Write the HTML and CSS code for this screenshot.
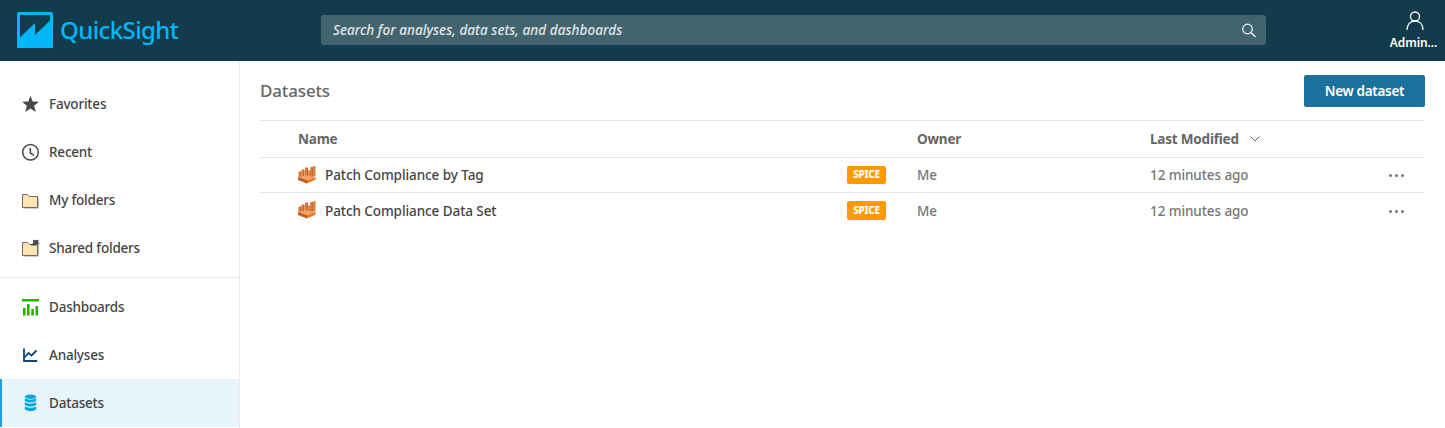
FILE: index.html
```html
<!DOCTYPE html>
<html lang="en">
<head>
<meta charset="utf-8">
<title>QuickSight</title>
<link rel="stylesheet" href="styles.css">
</head>
<body>
<svg width="0" height="0" class="defs" aria-hidden="true">
  <symbol id="dataset" viewBox="0 0 18 18">
    <path fill="#e27a30" d="M.5 5.500h2.500V11H.5zM3.500 3.500H6V12H3.500zM7 1.500h2.500V12H7zM10.300 4.500h2V12h-2zM12.300 1h2.500v10.500h-2.500zM15.300 0h2.200v10.500h-2.200z"/>
    <path fill="#ad5522" d="M2.500 5.500l.9.500v6h-.9zM5.600 3.500l.9.500v8h-.9zM9.200 1.500l.9.500v10h-.9zM14.300 1l.9.500v10h-.9z"/>
    <path fill="#f5a468" d="M0 11l9-1.500 8.500 1.500L9 14z"/>
    <path fill="#bf5b20" d="M0 11l9 3v3.500l-9-3.500z"/>
    <path fill="#e87b2b" d="M9 14l8.500-3v2.800L9 17.500z"/>
  </symbol>
</svg>
<header class="topbar">
  <div class="brand">
    <svg width="36" height="36" viewBox="0 0 36 36"><rect width="36" height="36" rx="1.500" fill="#02b6f8"/><path d="M3 3h30v5.500L18 23V11L3 25.500z" fill="#123c4c"/></svg>
    <span class="brand-name">QuickSight</span>
  </div>
  <div class="search">
    <span class="search-text">Search for analyses, data sets, and dashboards</span>
    <svg class="search-icon" width="16" height="16" viewBox="0 0 16 16" fill="none" stroke="#eef3f4" stroke-width="1.200"><circle cx="6.500" cy="6" r="4.800"/><path d="M10 9.500l4.500 4.500"/></svg>
  </div>
  <div class="user">
    <svg width="20" height="20" viewBox="0 0 20 20" fill="none" stroke="#fff" stroke-width="1.300"><circle cx="10" cy="5.500" r="4.500"/><path d="M2 19c0-5.600 3.300-9 8-9s8 3.400 8 9"/></svg>
    <span class="user-name">Admin...</span>
  </div>
</header>
<div class="body">
  <nav class="sidebar">
    <a class="item"><svg class="icon" viewBox="0 0 18 18"><path fill="#484848" d="M8.500 .8l2.200 5.700 6.200.3-4.800 3.900 1.700 6.200-5.300-3.500-5.300 3.500 1.700-6.200L.1 6.800l6.200-.3z"/></svg><span>Favorites</span></a>
    <a class="item"><svg class="icon" viewBox="0 0 18 18" fill="none" stroke="#484848" stroke-width="1.500"><circle cx="8.500" cy="9.300" r="7.800"/><path d="M8.300 5v5l3.700 2.300"/></svg><span>Recent</span></a>
    <a class="item"><svg class="icon folder" viewBox="0 0 18 18"><path d="M1.500 3.500h4l2 2h9v10.700h-15z" fill="none" stroke="#bbb"/><path d="M.5 2.500h5l2 2H15.500v11H.5z" fill="#fee6b0" stroke="#706a5e"/></svg><span>My folders</span></a>
    <a class="item"><svg class="icon folder" viewBox="0 0 18 18"><path d="M1.500 3.500h4l2 2h9v10.700h-15z" fill="none" stroke="#bbb"/><path d="M.5 2.500h5l2 2H15.500v11H.5z" fill="#fee6b0" stroke="#706a5e"/><path fill="#484848" d="M9 5.500q0-2 2.500-2.500-1.500-3 1-3.200 1.300 0 1.300 1 1-1.600 2.500-.8.800 1-.3 2.500 2 .5 1.700 2L15 3.800l.5 1.700z"/></svg><span>Shared folders</span></a>
    <div class="divider"></div>
    <a class="item"><svg class="icon" viewBox="0 0 18 18" fill="#2eb000"><path d="M0 1h17v2.500H0zM1 10h2.600v7.500H1zM5 6h2.600v11.500H5zM9.300 11h2.600v6.500H9.300zM13.500 8H16v9.500h-2.500z"/></svg><span>Dashboards</span></a>
    <a class="item"><svg class="icon" viewBox="0 0 18 18" fill="none" stroke="#104678" stroke-width="1.800"><path d="M2 2.500v12.500h13.200M2.500 11.500l4-4.500 3 2.500 5-5"/></svg><span>Analyses</span></a>
    <a class="item active"><svg class="icon" viewBox="0 0 18 18" fill="#09a5dd"><ellipse cx="8.500" cy="2.700" rx="5.700" ry="2.200"/><path d="M2.800 4.300q5.700 2.700 11.400 0v2.600q-5.700 3.300-11.400 0zM2.800 8.200q5.700 2.900 11.400 0v2.800q-5.700 3.300-11.400 0zM2.800 12.400q5.700 2.900 11.400 0v3q-5.700 3.600-11.400 0z"/></svg><span>Datasets</span></a>
  </nav>
  <main class="main">
    <div class="title-row"><h1>Datasets</h1><button class="new">New dataset</button></div>
    <div class="table">
      <div class="row head">
        <div class="name">Name</div><div class="owner">Owner</div>
        <div class="modified"><span>Last Modified</span><svg width="10" height="6" viewBox="0 0 10 6" fill="none" stroke="#666"><path d="M.5.500L5 5 9.500.500"/></svg></div><div class="more"></div>
      </div>
      <div class="row">
        <div class="name"><svg class="ds"><use href="#dataset"/></svg><span>Patch Compliance by Tag</span><b class="spice">SPICE</b></div><div class="owner">Me</div>
        <div class="modified">12 minutes ago</div><div class="more"><i></i><i></i><i></i></div>
      </div>
      <div class="row last">
        <div class="name"><svg class="ds"><use href="#dataset"/></svg><span>Patch Compliance Data Set</span><b class="spice">SPICE</b></div><div class="owner">Me</div>
        <div class="modified">12 minutes ago</div><div class="more"><i></i><i></i><i></i></div>
      </div>
    </div>
  </main>
</div>
</body>
</html>
```
FILE: styles.css
```css
* { box-sizing: border-box; }
body { margin: 0; height: 428px; overflow: hidden; background: #fff; font-family: "Noto Sans", "Open Sans", sans-serif; font-size: 13.500px; font-weight: 500; color: #444; white-space: nowrap; }
.defs { display: none; }
.topbar { height: 61px; background: #123c4c; display: flex; align-items: flex-start; }
.brand { width: 321px; padding: 12px 0 0 17px; display: flex; gap: 7px; }
.brand-name { color: #02b6f8; font-size: 24px; font-weight: 500; line-height: 36px; letter-spacing: -.6px; }
.search { width: 945px; height: 30px; margin-top: 15px; padding: 0 9px 0 12px; border-radius: 3px; background: #42646f; display: flex; align-items: center; justify-content: space-between; }
.search-text { color: #e0e6e8; font-style: italic; font-size: 13.500px; font-weight: 500; letter-spacing: .05px; }
.search-icon { margin-top: 2px; }
.user { width: 64px; margin-left: 115px; padding: 11px 0 0 4px; display: flex; flex-direction: column; align-items: center; color: #fff; }
.user-name { font-size: 12px; line-height: 17px; margin-top: 3px; font-weight: 600; letter-spacing: -.1px; padding-right: 3px; }
.body { display: flex; height: 367px; }
.sidebar { width: 240px; padding-top: 19px; border-right: 1px solid #eaeaea; }
.item { height: 48px; padding-left: 22px; display: flex; align-items: center; gap: 9px; letter-spacing: -.2px; }
.icon { width: 18px; height: 18px; flex: none; }
.folder { margin-top: 2px; overflow: visible; }
.divider { height: 6px; margin-top: 5px; border-top: 1px solid #e8e8e8; }
.active { background: #e7f4fb; border-left: 2px solid #259fd7; padding-left: 20px; }
.main { width: 1205px; padding: 0 20px; }
.title-row { height: 59px; display: flex; align-items: center; justify-content: space-between; }
h1 { margin: 0; font-size: 17px; font-weight: 500; color: #666; letter-spacing: -.15px; }
.new { width: 121px; height: 32px; padding: 0; border: 0; border-radius: 2px; margin-top: 1px; background: #1b719b; color: #fff; font: 600 13.500px "Noto Sans", sans-serif; letter-spacing: -.3px; }
.table { border-top: 1px solid #e7e7e7; }
.row { height: 35px; display: grid; grid-template-columns: 657px 233px 220px 55px; align-items: center; border-bottom: 1px solid #e7e7e7; color: #777; letter-spacing: -.08px; }
.head { height: 37px; font-weight: 700; color: #666; letter-spacing: -.2px; }
.last { height: 36px; border: 0; }
.name { display: flex; align-items: center; padding-left: 38px; color: #444; }
.head .name { color: #666; }
.ds { width: 18px; height: 18px; margin-right: 9px; margin-top: -1px; }
.last .ds { margin-top: -3px; }
.spice { margin-left: auto; margin-right: 31px; width: 39px; height: 18px; border-radius: 2px; background: #ff9900; color: #fff; font-size: 10px; font-weight: 800; line-height: 17px; text-align: center; letter-spacing: -.3px; }
.last .spice { height: 19px; line-height: 18px; margin-top: -1px; }
.modified { display: flex; align-items: center; gap: 11px; }
.more { display: flex; gap: 3px; padding-left: 18.500px; }
.more i { width: 3px; height: 3px; border-radius: 50%; background: #777; }
```
